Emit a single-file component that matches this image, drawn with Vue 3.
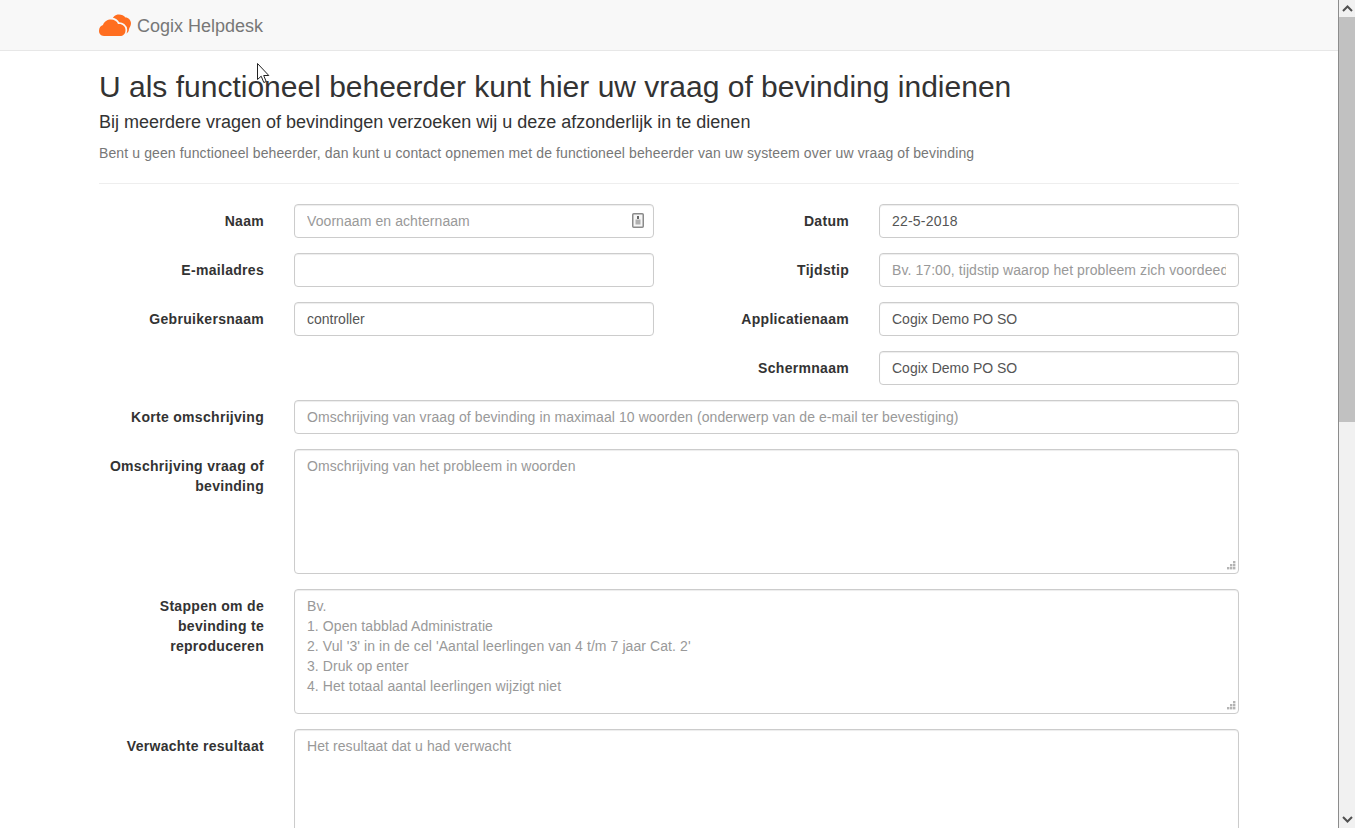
<script setup>
const leftFields = [
  { label: 'Naam', placeholder: 'Voornaam en achternaam', value: '', icon: true },
  { label: 'E-mailadres', placeholder: '', value: '' },
  { label: 'Gebruikersnaam', placeholder: '', value: 'controller' },
]
const rightFields = [
  { label: 'Datum', placeholder: '', value: '22-5-2018', digits: true },
  { label: 'Tijdstip', placeholder: 'Bv. 17:00, tijdstip waarop het probleem zich voordeed', value: '' },
  { label: 'Applicatienaam', placeholder: '', value: 'Cogix Demo PO SO' },
  { label: 'Schermnaam', placeholder: '', value: 'Cogix Demo PO SO' },
]
const areas = [
  { label: 'Omschrijving vraag of bevinding', placeholder: 'Omschrijving van het probleem in woorden' },
  {
    label: 'Stappen om de bevinding te reproduceren',
    placeholder: "Bv.\n1. Open tabblad Administratie\n2. Vul '3' in in de cel 'Aantal leerlingen van 4 t/m 7 jaar Cat. 2'\n3. Druk op enter\n4. Het totaal aantal leerlingen wijzigt niet",
  },
  { label: 'Verwachte resultaat', placeholder: 'Het resultaat dat u had verwacht' },
]
const grip = [[6, 0], [3, 3], [6, 3], [0, 6], [3, 6], [6, 6]]
</script>

<template>
  <div class="screen">
    <div class="page">
      <nav class="navbar">
        <div class="container brand">
          <svg class="logo" width="32" height="22" viewBox="0 0 32 22">
            <path class="cloud" d="M13 7 C13.500 3 16 0.500 20 0.500 C22.500 0.500 25 1.500 26.500 3.500 C29.500 3.500 31.800 6 32 9 C32 12 30.500 13.500 30 15 C30 17.500 28.500 19.500 26 19.500 L18 19 Z" />
            <path class="cloud front" d="M5 22 C1.500 22 0 19.500 0 16.800 C0 13.500 2 11.500 4 11 C5 7.500 8.500 5.500 12 5.500 C15 5.500 18 7 19 10 C23 9.500 26.500 12 26.500 16 C26.500 20 24 22 21 22 Z" />
          </svg>
          <span class="brand-name">Cogix Helpdesk</span>
        </div>
      </nav>
      <main class="container">
        <h1>U als functioneel beheerder kunt hier uw vraag of bevinding indienen</h1>
        <h2>Bij meerdere vragen of bevindingen verzoeken wij u deze afzonderlijk in te dienen</h2>
        <p class="intro">Bent u geen functioneel beheerder, dan kunt u contact opnemen met de functioneel beheerder van uw systeem over uw vraag of bevinding</p>
        <hr />
        <form class="form">
          <div class="columns">
            <div class="column">
              <div v-for="f in leftFields" :key="f.label" class="field">
                <label>{{ f.label }}</label>
                <div class="control">
                  <input type="text" :value="f.value" :placeholder="f.placeholder" />
                  <svg v-if="f.icon" class="contact" width="12" height="15" viewBox="0 0 12 15">
                    <rect x="0.750" y="0.750" width="10.500" height="13.500" rx="1" fill="#f6f6f6" stroke="#8a8a8a" stroke-width="1.500" />
                    <rect x="5" y="3" width="2" height="3" fill="#666" />
                    <rect x="3.500" y="6.500" width="5" height="5" fill="#b0b0b0" />
                  </svg>
                </div>
              </div>
            </div>
            <div class="column">
              <div v-for="f in rightFields" :key="f.label" class="field">
                <label>{{ f.label }}</label>
                <div class="control">
                  <input type="text" :class="{ digits: f.digits }" :value="f.value" :placeholder="f.placeholder" />
                </div>
              </div>
            </div>
          </div>
          <div class="field">
            <label>Korte omschrijving</label>
            <div class="control">
              <input type="text" placeholder="Omschrijving van vraag of bevinding in maximaal 10 woorden (onderwerp van de e-mail ter bevestiging)" />
            </div>
          </div>
          <div v-for="a in areas" :key="a.label" class="field">
            <label>{{ a.label }}</label>
            <div class="control">
              <textarea :placeholder="a.placeholder"></textarea>
              <svg class="grip" width="9" height="9" viewBox="0 0 9 9">
                <rect v-for="(g, i) in grip" :key="i" :x="g[0]" :y="g[1]" width="2.400" height="2.400" fill="#b4b4b4" />
              </svg>
            </div>
          </div>
        </form>
      </main>
    </div>

    <div class="scrollbar">
      <div class="arrow">
        <svg width="11" height="7" viewBox="0 0 11 7"><path d="M1 6 L5.500 1.500 L10 6" fill="none" stroke="#505050" stroke-width="2" /></svg>
      </div>
      <div class="track"><div class="thumb"></div></div>
      <div class="arrow">
        <svg width="11" height="7" viewBox="0 0 11 7"><path d="M1 1 L5.500 5.500 L10 1" fill="none" stroke="#505050" stroke-width="2" /></svg>
      </div>
    </div>

    <svg class="cursor" width="14" height="22" viewBox="0 0 14 22">
      <path d="M0.500 0.500 L0.500 16.500 L4.200 13.200 L6.800 19.500 L9.200 18.500 L6.700 12.500 L11.800 12.500 Z" fill="#fff" stroke="#222" stroke-width="1" />
    </svg>
  </div>
</template>

<style>
html, body { margin: 0; overflow: hidden; }
</style>

<style scoped>
.screen {
  position: relative;
  display: flex;
  width: 1355px;
  height: 828px;
  overflow: hidden;
  background: #fff;
  font-family: "Liberation Sans", Arial, sans-serif;
  font-size: 14px;
  line-height: 20px;
  color: #333;
}
.page { width: 1338px; flex: none; }
.navbar {
  height: 50px;
  background: #f8f8f8;
  border-bottom: 1px solid #e7e7e7;
}
.container { width: 1140px; margin: 0 auto; }
.brand {
  display: flex;
  align-items: center;
  height: 50px;
  gap: 6px;
  font-size: 18px;
  color: #777;
}
.brand-name { padding-top: 2px; }
.logo { flex: none; }
.cloud { fill: #ff6e20; }
.front { stroke: #f8f8f8; stroke-width: 3.500px; paint-order: stroke; }
h1 {
  margin: 19px 0 0;
  font-size: 30px;
  line-height: 33px;
  font-weight: 400;
}
h2 {
  margin: 9px 0 0;
  font-size: 18px;
  line-height: 20px;
  font-weight: 400;
}
.intro { margin: 11px 0 0; color: #777; letter-spacing: .115px; }
hr { margin: 20px 0; border: 0; border-top: 1px solid #eee; }
.form { display: flex; flex-direction: column; gap: 15px; }
.columns { display: grid; grid-template-columns: 1fr 1fr; gap: 30px; }
.column { display: flex; flex-direction: column; gap: 15px; }
.field { display: flex; gap: 30px; }
label {
  flex: none;
  width: 165px;
  padding-top: 7px;
  text-align: right;
  font-weight: 700;
  letter-spacing: .3px;
}
.control { position: relative; flex: 1; display: flex; min-width: 0; }
input, textarea {
  display: block;
  width: 100%;
  box-sizing: border-box;
  padding: 6px 12px;
  border: 1px solid #ccc;
  border-radius: 4px;
  box-shadow: inset 0 1px 1px rgba(0, 0, 0, .075);
  background: #fff;
  color: #555;
  font: inherit;
  outline: 0;
}
input { height: 34px; }
input.digits { letter-spacing: .2px; }
textarea { height: 125px; resize: none; overflow: hidden; }
input::placeholder, textarea::placeholder { color: #999; opacity: 1; letter-spacing: .08px; }
.contact { position: absolute; top: 9px; right: 10px; }
.grip { position: absolute; right: 3px; bottom: 4px; }
.scrollbar {
  flex: none;
  width: 17px;
  height: 828px;
  box-sizing: border-box;
  display: flex;
  flex-direction: column;
  background: #f1f1f1;
  border-left: 1px solid #8c8c8c;
}
.arrow { flex: none; height: 17px; display: flex; align-items: center; justify-content: center; }
.track { flex: 1; }
.thumb { height: 405px; background: #c1c1c1; }
.cursor { position: absolute; left: 257px; top: 63px; }
</style>
